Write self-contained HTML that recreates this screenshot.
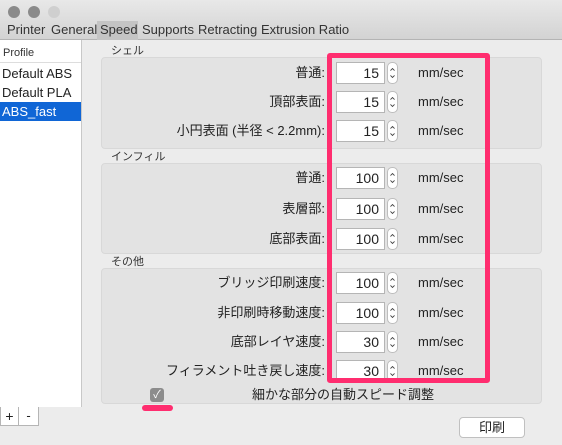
<!DOCTYPE html>
<html><head><meta charset="utf-8"><style>
*{margin:0;padding:0;box-sizing:border-box}
body{width:562px;height:445px;overflow:hidden;background:#ececec;font-family:"Liberation Sans","Noto Sans CJK JP",sans-serif;font-size:13px;color:#222;position:relative;line-height:16px}
.a{position:absolute}
.tb{left:0;top:0;width:562px;height:40px;background:linear-gradient(#e8e8e8,#d3d3d3);border-bottom:1px solid #b4b4b4}
.dot{width:12px;height:12px;border-radius:50%;top:6px;background:#8a8a8a}
.tab{top:22px;font-size:13px;color:#333}
.side{left:0;top:40px;width:82px;height:367px;background:#fff;border-right:1px solid #c8c8c8}
.grp{left:101px;width:441px;background:#e3e3e3;border:1px solid #d8d8d8;border-radius:4px}
.gl{left:111px;font-size:11px;color:#333}
.lbl{right:237px;text-align:right;font-size:13px;white-space:nowrap}
.in{left:336px;width:49px;height:22px;background:#fff;border:1px solid #b5b5b5;text-align:right;padding-right:5px;font-size:14px;line-height:21px}
.st{left:387px;width:11px;height:22px;background:#fff;border:1px solid #bdbdbd;border-radius:5px}
.u{left:418px;font-size:13px}
</style></head><body>
<svg width="0" height="0" style="position:absolute"><defs><g id="ar"><path d="M3 8 L5.5 5.5 L8 8 M3 14 L5.5 16.5 L8 14" stroke="#444" stroke-width="1.1" fill="none"/></g></defs></svg>
<div class="a tb"></div>
<div class="a dot" style="left:8px"></div>
<div class="a dot" style="left:28px"></div>
<div class="a dot" style="left:48px;background:#cfcfcf"></div>
<div class="a" style="left:97px;top:21px;width:41px;height:19px;background:#c4c4c4"></div>
<div class="a tab" style="left:7px">Printer</div>
<div class="a tab" style="left:51px">General</div>
<div class="a tab" style="left:100px">Speed</div>
<div class="a tab" style="left:142px">Supports</div>
<div class="a tab" style="left:198px">Retracting</div>
<div class="a tab" style="left:261px">Extrusion Ratio</div>
<div class="a side"></div>
<div class="a" style="left:0;top:62px;width:81px;height:1px;background:#ddd"></div>
<div class="a" style="left:3px;top:45px;font-size:11px;color:#333">Profile</div>
<div class="a" style="left:2px;top:66px">Default ABS</div>
<div class="a" style="left:2px;top:85px">Default PLA</div>
<div class="a" style="left:0;top:102px;width:81px;height:19px;background:#1066d6"></div>
<div class="a" style="left:2px;top:104px;color:#fff">ABS_fast</div>
<div class="a gl" style="top:43px">シェル</div>
<div class="a grp" style="top:57px;height:92px"></div>
<div class="a gl" style="top:149px">インフィル</div>
<div class="a grp" style="top:163px;height:91px"></div>
<div class="a gl" style="top:254px">その他</div>
<div class="a grp" style="top:268px;height:136px"></div>

<div class="a lbl" style="top:65px">普通:</div>
<div class="a lbl" style="top:94px">頂部表面:</div>
<div class="a lbl" style="top:123px">小円表面 (半径 &lt; 2.2mm):</div>
<div class="a lbl" style="top:170px">普通:</div>
<div class="a lbl" style="top:201px">表層部:</div>
<div class="a lbl" style="top:231px">底部表面:</div>
<div class="a lbl" style="top:275px">ブリッジ印刷速度:</div>
<div class="a lbl" style="top:305px">非印刷時移動速度:</div>
<div class="a lbl" style="top:334px">底部レイヤ速度:</div>
<div class="a lbl" style="top:363px">フィラメント吐き戻し速度:</div>

<div class="a in" style="top:62px">15</div><svg class="a st" style="top:62px" viewBox="0 0 11 22"><use href="#ar"/></svg><div class="a u" style="top:65px">mm/sec</div>
<div class="a in" style="top:91px">15</div><svg class="a st" style="top:91px" viewBox="0 0 11 22"><use href="#ar"/></svg><div class="a u" style="top:94px">mm/sec</div>
<div class="a in" style="top:120px">15</div><svg class="a st" style="top:120px" viewBox="0 0 11 22"><use href="#ar"/></svg><div class="a u" style="top:123px">mm/sec</div>
<div class="a in" style="top:167px">100</div><svg class="a st" style="top:167px" viewBox="0 0 11 22"><use href="#ar"/></svg><div class="a u" style="top:170px">mm/sec</div>
<div class="a in" style="top:198px">100</div><svg class="a st" style="top:198px" viewBox="0 0 11 22"><use href="#ar"/></svg><div class="a u" style="top:201px">mm/sec</div>
<div class="a in" style="top:228px">100</div><svg class="a st" style="top:228px" viewBox="0 0 11 22"><use href="#ar"/></svg><div class="a u" style="top:231px">mm/sec</div>
<div class="a in" style="top:272px">100</div><svg class="a st" style="top:272px" viewBox="0 0 11 22"><use href="#ar"/></svg><div class="a u" style="top:275px">mm/sec</div>
<div class="a in" style="top:302px">100</div><svg class="a st" style="top:302px" viewBox="0 0 11 22"><use href="#ar"/></svg><div class="a u" style="top:305px">mm/sec</div>
<div class="a in" style="top:331px">30</div><svg class="a st" style="top:331px" viewBox="0 0 11 22"><use href="#ar"/></svg><div class="a u" style="top:334px">mm/sec</div>
<div class="a in" style="top:360px">30</div><svg class="a st" style="top:360px" viewBox="0 0 11 22"><use href="#ar"/></svg><div class="a u" style="top:363px">mm/sec</div>

<div class="a" style="left:327px;top:53px;width:163px;height:330px;border:5px solid #ff2d6f;border-radius:3px"></div>
<div class="a" style="left:150px;top:388px;width:14px;height:14px;background:#8c8c8c;border-radius:3px;color:#fff;font-size:11px;line-height:14px;text-align:center">✓</div>
<div class="a" style="left:142px;top:405px;width:31px;height:6px;background:#ff2d6f;border-radius:3px"></div>
<div class="a" style="left:252px;top:387px;font-size:13px">細かな部分の自動スピード調整</div>
<div class="a" style="left:0;top:407px;width:19px;height:19px;border:1px solid #b5b5b5;border-top:none;background:#fff;text-align:center;font-size:14px;line-height:18px">+</div>
<div class="a" style="left:19px;top:407px;width:20px;height:19px;border:1px solid #b5b5b5;border-top:none;border-left:none;background:#fff;text-align:center;font-size:13px;line-height:18px">-</div>
<div class="a" style="left:459px;top:417px;width:66px;height:21px;background:#fff;border:1px solid #c0c0c0;border-radius:4px;text-align:center;line-height:19px;font-size:13px">印刷</div>
</body></html>
